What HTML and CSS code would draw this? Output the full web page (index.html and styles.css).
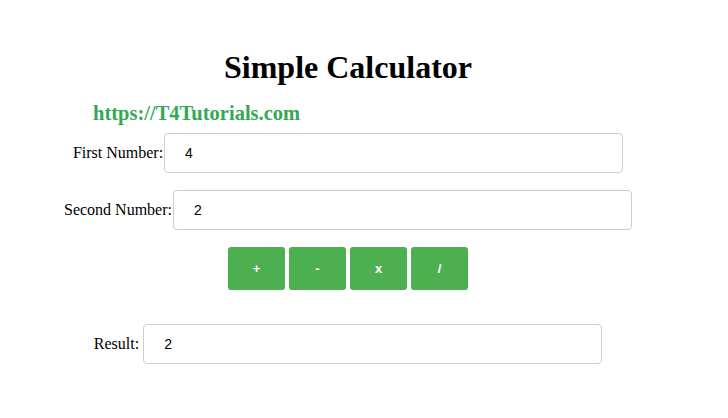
FILE: index.html
```html
<!DOCTYPE html>
<html>
<head>
<meta charset="utf-8">
<link rel="stylesheet" href="styles.css">
</head>
<body>
<div class="page">
  <h1 class="title">Simple Calculator</h1>
  <div class="site">https://T4Tutorials.com</div>
  <div class="row row-first">
    <label class="label">First Number:</label>
    <input class="field" type="text" value="4">
  </div>
  <div class="row row-second">
    <label class="label">Second Number:</label>
    <input class="field" type="text" value="2">
  </div>
  <div class="buttons">
    <button class="op">+</button>
    <button class="op">-</button>
    <button class="op">x</button>
    <button class="op">/</button>
  </div>
  <div class="row row-result">
    <label class="label">Result:</label>
    <input class="field" type="text" value="2">
  </div>
</div>
</body>
</html>
```
FILE: styles.css
```css
html, body {
  margin: 0;
  padding: 0;
  background: #ffffff;
}
body {
  font-family: "Liberation Serif", "Times New Roman", serif;
  color: #000;
}
.page {
  width: 696px;
  padding-top: 50px;
}
.title {
  margin: 0;
  font-size: 32px;
  font-weight: bold;
  text-align: center;
  line-height: 34px;
}
.site {
  margin-top: 17px;
  padding-left: 93px;
  font-size: 20.5px;
  font-weight: bold;
  color: #34a853;
  line-height: 24px;
}
.row {
  display: flex;
  justify-content: center;
  align-items: center;
}
.row-first { margin-top: 8px; }
.row-second { margin-top: 17px; }
.row-result { margin-top: 34px; }
.label {
  font-size: 16px;
  margin-right: 1px;
}
.row-result .label { margin-right: 4px; }
.field {
  box-sizing: border-box;
  width: 459px;
  height: 40px;
  border: 1px solid #cccccc;
  border-radius: 4px;
  padding: 0 20px;
  font-family: "Liberation Sans", Arial, sans-serif;
  font-size: 14px;
  color: #000;
  outline: none;
}
.buttons {
  display: flex;
  justify-content: center;
  gap: 4px;
  margin-top: 17px;
}
.op {
  width: 57px;
  height: 43px;
  border: none;
  border-radius: 3px;
  background: #4caf50;
  color: #ffffff;
  font-family: "Liberation Sans", Arial, sans-serif;
  font-size: 13px;
  font-weight: bold;
  padding: 0;
}
```
